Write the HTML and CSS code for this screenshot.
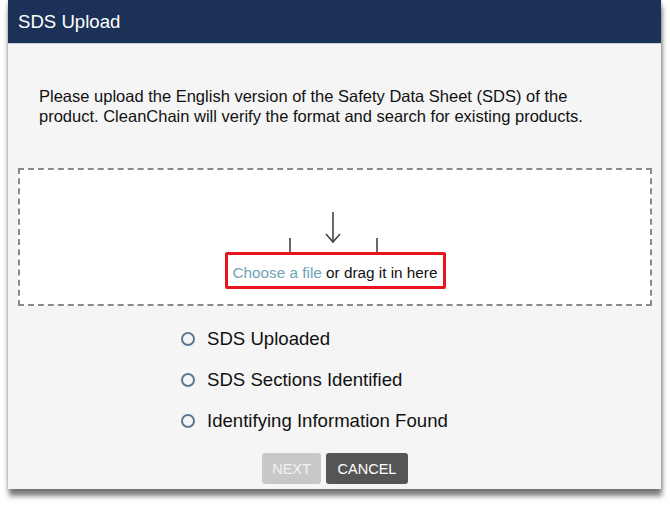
FILE: index.html
```html
<!DOCTYPE html>
<html>
<head>
<meta charset="utf-8">
<link rel="stylesheet" href="styles.css">
</head>
<body>
<div class="dialog">
  <div class="header">SDS Upload</div>
  <div class="content">
    <p class="intro">Please upload the English version of the Safety Data Sheet (SDS) of the product. CleanChain will verify the format and search for existing products.</p>
    <div class="dropzone">
      <svg class="upload-icon" width="100" height="42" viewBox="0 0 100 42">
        <g fill="none" stroke="#444" stroke-width="1.6">
          <line x1="50" y1="2" x2="50" y2="32"/>
          <polyline points="43,24 50,32 57,24"/>
          <line x1="7" y1="28" x2="7" y2="42"/>
          <line x1="94" y1="28" x2="94" y2="42"/>
        </g>
      </svg>
      <div class="choose"><span class="link">Choose a file</span> or drag it in here</div>
    </div>
    <ul class="steps">
      <li class="step"><span class="radio"></span>SDS Uploaded</li>
      <li class="step"><span class="radio"></span>SDS Sections Identified</li>
      <li class="step"><span class="radio"></span>Identifying Information Found</li>
    </ul>
    <div class="actions">
      <button class="btn btn-next">NEXT</button>
      <button class="btn btn-cancel">CANCEL</button>
    </div>
  </div>
</div>
</body>
</html>
```
FILE: styles.css
```css
html, body {
  margin: 0;
  padding: 0;
  background: #ffffff;
  font-family: "Liberation Sans", Arial, sans-serif;
}
body {
  padding-bottom: 20px;
}
.dialog {
  margin-left: 8px;
  width: 653px;
  background: #f5f5f5;
  box-shadow: 1px 7px 5px rgba(0, 0, 0, 0.5), 0 0 4px rgba(0, 0, 0, 0.25);
}
.header {
  height: 43px;
  line-height: 44px;
  padding-left: 10px;
  background: #1b3157;
  color: #ffffff;
  font-size: 18.6px;
  border-bottom: 1px solid #c7ced8;
}
.content {
  padding: 0 9px 5px 10px;
}
.intro {
  margin: 42px 38px 0 21px;
  font-size: 16.5px;
  line-height: 20px;
  color: #111;
}
.dropzone {
  margin-top: 42px;
  border: 2px dashed #8a8a8a;
  background: #ffffff;
  height: 134px;
  display: flex;
  flex-direction: column;
  align-items: center;
}
.upload-icon {
  display: block;
  margin-top: 40px;
  margin-left: -4px;
}
.choose {
  border: 3px solid #e8141c;
  border-radius: 2px;
  padding: 9px 5px 4px 5px;
  line-height: 18px;
  font-size: 15.3px;
  color: #111;
  width: 205px;
  white-space: nowrap;
}
.link {
  color: #6fa2b6;
}
.steps {
  list-style: none;
  margin: 12px 0 0 0;
  padding: 0 0 0 163px;
}
.step {
  height: 41px;
  display: flex;
  align-items: center;
  font-size: 18.6px;
  color: #111;
}
.radio {
  width: 10px;
  height: 10px;
  border: 2.6px solid #5f7891;
  border-radius: 50%;
  margin-right: 12px;
  flex: none;
}
.actions {
  margin-top: 12px;
  display: flex;
  justify-content: center;
  gap: 5px;
}
.btn {
  height: 31px;
  border: none;
  border-radius: 3px;
  font-family: "Liberation Sans", Arial, sans-serif;
  font-size: 14.5px;
  color: #ffffff;
  padding: 0;
}
.btn-next {
  background: #c8c8c8;
  width: 59px;
  color: #f2f2f2;
}
.btn-cancel {
  background: #555555;
  width: 82px;
}
```
